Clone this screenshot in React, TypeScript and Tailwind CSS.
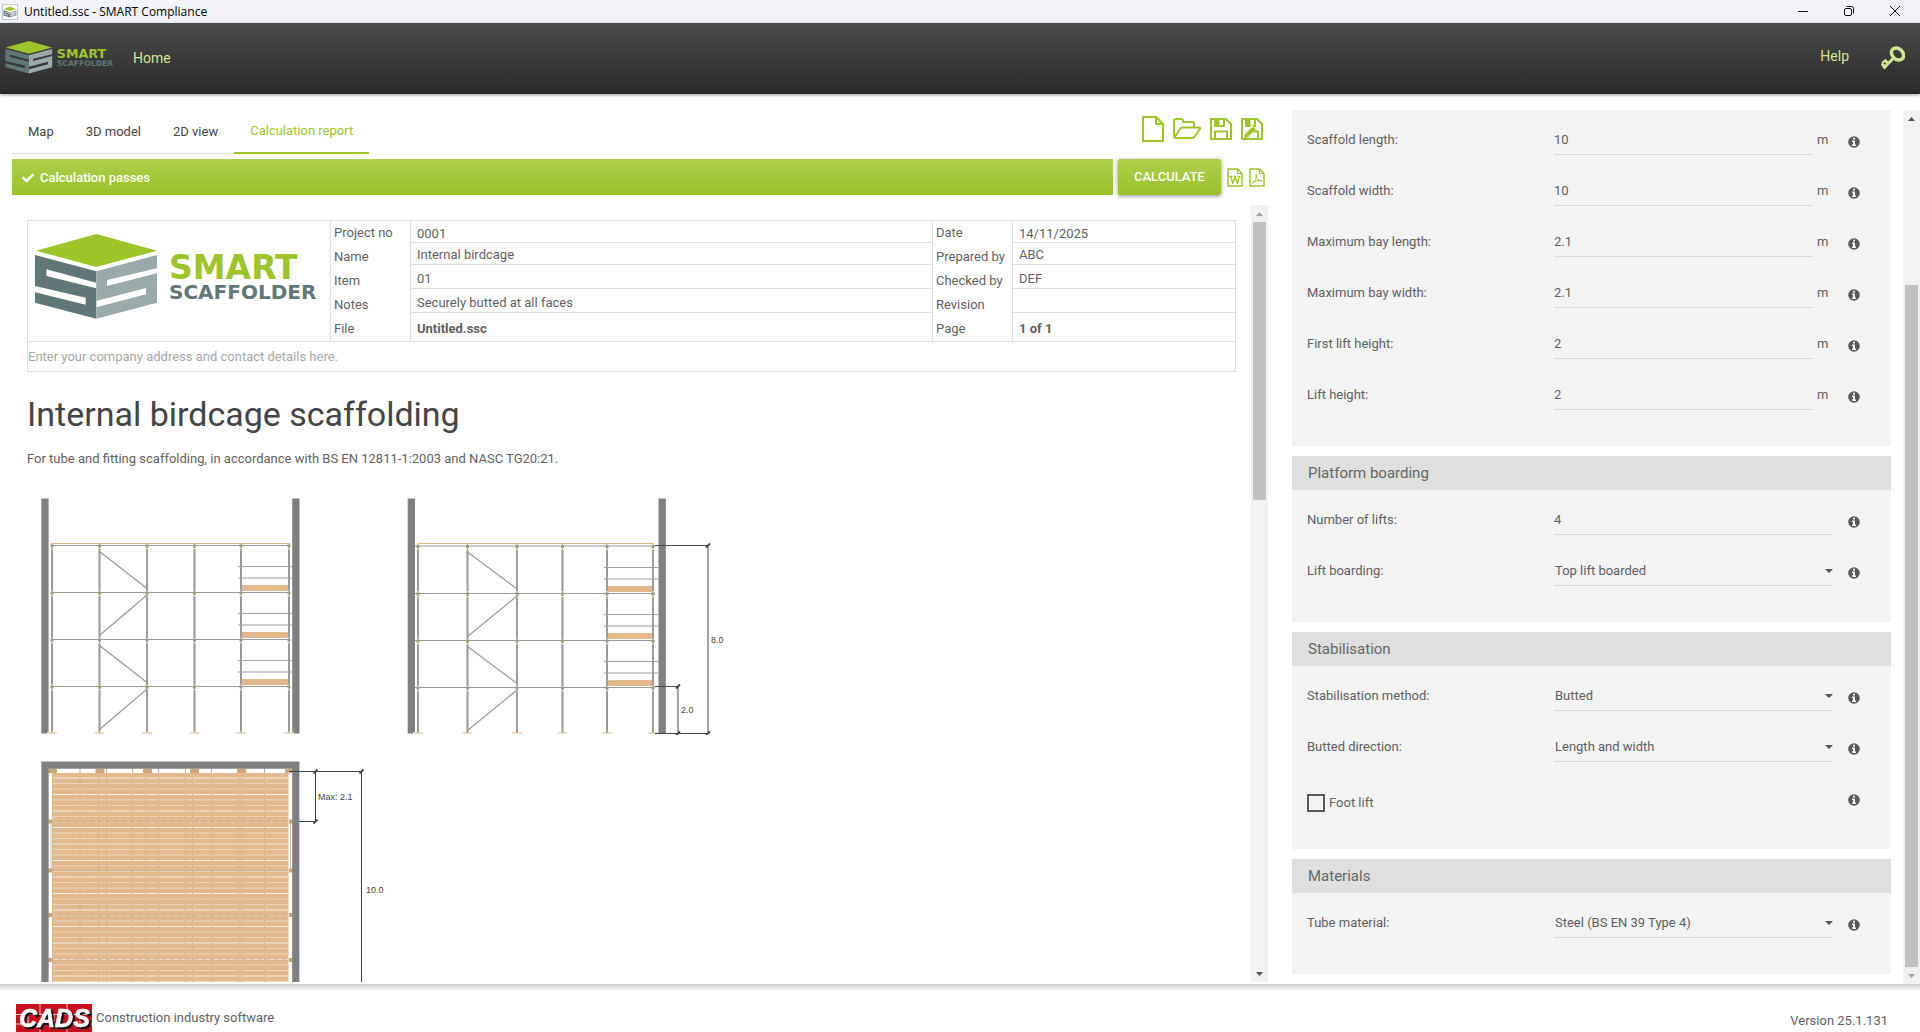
import React from "react";
import { FaCheck } from "react-icons/fa";

// Types
interface FieldProps {
  id: string;
  label: string;
  value: string;
  unit?: string;
  kind?: "text" | "select";
}

interface SectionData {
  title?: string;
  fields: FieldProps[];
  checkbox?: string;
}

const sections: SectionData[] = [
  {
    fields: [
      { id: "scaffold-length", label: "Scaffold length:", value: "10", unit: "m" },
      { id: "scaffold-width", label: "Scaffold width:", value: "10", unit: "m" },
      { id: "bay-length", label: "Maximum bay length:", value: "2.1", unit: "m" },
      { id: "bay-width", label: "Maximum bay width:", value: "2.1", unit: "m" },
      { id: "first-lift", label: "First lift height:", value: "2", unit: "m" },
      { id: "lift-height", label: "Lift height:", value: "2", unit: "m" },
    ],
  },
  {
    title: "Platform boarding",
    fields: [
      { id: "lifts", label: "Number of lifts:", value: "4" },
      { id: "boarding", label: "Lift boarding:", value: "Top lift boarded", kind: "select" },
    ],
  },
  {
    title: "Stabilisation",
    fields: [
      { id: "method", label: "Stabilisation method:", value: "Butted", kind: "select" },
      { id: "direction", label: "Butted direction:", value: "Length and width", kind: "select" },
    ],
    checkbox: "Foot lift",
  },
  {
    title: "Materials",
    fields: [
      { id: "tube", label: "Tube material:", value: "Steel (BS EN 39 Type 4)", kind: "select" },
    ],
  },
];

const reportRows = [
  ["Project no", "0001", "Date", "14/11/2025"],
  ["Name", "Internal birdcage", "Prepared by", "ABC"],
  ["Item", "01", "Checked by", "DEF"],
  ["Notes", "Securely butted at all faces", "Revision", ""],
  ["File", "Untitled.ssc", "Page", "1 of 1"],
];

const SmartLogo: React.FC<{ className?: string }> = ({ className }) => (
  <svg viewBox="34 232 284 90" className={className} role="img" aria-label="Smart Scaffolder">
    <polygon fill="#9dc428" points="36,250.7 96.3,234 157,250.7 96.3,267" />
    <polygon
      fill="#5f7777"
      points="35,255 96.3,271.3 96.3,282.7 46.5,269.3 46.5,276 96.3,288.3 96.3,318.7 35,302.7 35,292.3 85.7,304.7 85.7,297.7 35,286"
    />
    <polygon
      fill="#9aa9a9"
      points="96.3,271.3 157,255 157,268.3 107,280 107,286 157,273.3 157,302.7 96.3,318.7 96.3,307.3 146,294.3 146,288 96.3,301"
    />
    <g fontFamily="DejaVu Sans, sans-serif" fontWeight="700">
      <text x="169" y="279" fontSize="33" fill="#9dc428">SMART</text>
      <text x="169" y="299" fontSize="20" fill="#5f7777">SCAFFOLDER</text>
    </g>
  </svg>
);

const CadsLogo = () => (
  <svg viewBox="0 0 76 28" className="h-7 w-[76px]" role="img" aria-label="CADS">
    <rect width="76" height="28" fill="#c8101c" />
    <path
      d="M0 10.500H76M0 20H76M24 0V10M51 0V10M12 10V20M38 10V20M64 10V20M24 20V28M51 20V28"
      stroke="#f0c0b4"
      strokeWidth="1"
    />
    <text
      x="3"
      y="22.500"
      fontFamily="Liberation Sans, sans-serif"
      fontWeight="700"
      fontStyle="italic"
      fontSize="25"
      fill="#fff"
      stroke="#fff"
      strokeWidth="0.600"
      className="drop-shadow-[2px_2px_0_#111]"
    >
      CADS
    </text>
  </svg>
);

// Toolbar icons
const FileIcon = () => (
  <svg viewBox="0 0 24 28" className="h-7 w-6" fill="none" stroke="#9dc428" strokeWidth="2" strokeLinejoin="round">
    <path d="M2 2H15L22 9V26H2Z" />
    <path d="M15 2V9H22" />
  </svg>
);

const FolderIcon = () => (
  <svg viewBox="0 0 30 24" className="h-6 w-[30px]" fill="none" stroke="#9dc428" strokeWidth="2" strokeLinejoin="round">
    <path d="M2 18V4Q2 2 4 2H9Q11 2 11 4V5H20Q22 5 22 7V10" />
    <path d="M2.500 20.500L8 12Q9 10.500 11 10.500H27Q29 10.500 27.500 12.500L23 19Q22 21 20 21H4Q2 21 2 18" />
  </svg>
);

const SaveIcon: React.FC<{ edit?: boolean }> = ({ edit }) => (
  <svg viewBox="0 0 24 24" className="size-6" fill="none" stroke="#9dc428" strokeWidth="2" strokeLinejoin="round">
    <path d="M2 2H17L22 7V22H2Z" />
    <path d="M6 2V9H15V2" />
    <rect x="6.500" y="3" width="4" height="5.500" fill="#9dc428" stroke="none" />
    <path d="M6 22V14.500H18V22" />
    {edit && (
      <>
        <path d="M5 19L14 10" stroke="#fff" strokeWidth="6" />
        <path d="M7.500 17.500L14.500 11" strokeWidth="4" />
        <path d="M4 21L5.500 15.500L9.500 19.500Z" fill="#9dc428" stroke="none" />
      </>
    )}
  </svg>
);

const DocIcon: React.FC<{ type: "word" | "pdf" }> = ({ type }) => (
  <svg viewBox="0 0 16 19" className="h-[19px] w-4" fill="none" stroke="#9dc428" strokeLinejoin="round">
    <path d="M1 1H10.500L15 5.500V18H1Z" strokeWidth="1.500" />
    <path d="M10.500 1V5.500H15" strokeWidth="1.200" />
    {type === "word" ? (
      <path d="M2.500 8.500H5.500M6.800 8.500H9.400M10.700 8.500H13.500M4 8.500L5.600 15.500L8.100 9L10.500 15.500L12.200 8.500" strokeWidth="1.300" />
    ) : (
      <path d="M3 15.500C5 14.500 8 9.500 7.500 6.500C7.200 5 6.500 6 6.900 7.500C7.500 10.500 9.500 13 12.500 13.300C13.500 13.300 13 12.300 11.500 12.300C8.500 12.300 5.500 13.300 3.500 14.800" />
    )}
  </svg>
);

const KeyIcon = () => (
  <svg viewBox="0 0 24 24" className="size-6" fill="none" stroke="#d2e68f">
    <ellipse cx="16.500" cy="8" rx="6.800" ry="5.300" transform="rotate(45 16.500 8)" strokeWidth="3.500" />
    <path d="M12.500 12L2.500 22.500M7 17.500L3.500 13.800M3.600 20.800L0.800 17.500" strokeWidth="3" />
    <path d="M3.600 14.800L1 17.400" strokeWidth="2" />
  </svg>
);

const InfoIcon: React.FC<{ className: string }> = ({ className }) => (
  <svg viewBox="0 0 12 12" className={`mr-[31px] size-3 shrink-0 ${className}`}>
    <circle cx="6" cy="6" r="5.800" fill="#5a5a5a" />
    <path d="M5 1.800H7V3.500H5ZM4 4.500H7V8.500H8V10H4V8.500H5V6H4Z" fill="#f3f3f3" />
  </svg>
);

const WindowControls = () => (
  <div className="flex items-center pr-0.5 pb-0.5">
    <button aria-label="Minimise" className="flex h-5 w-[46px] items-center justify-center">
      <svg width="12" height="12" stroke="#111" fill="none"><path d="M1 6.500H11" /></svg>
    </button>
    <button aria-label="Restore" className="flex h-5 w-[46px] items-center justify-center">
      <svg width="12" height="12" stroke="#111" fill="none">
        <rect x="1.500" y="3.500" width="7" height="7" rx="1.500" />
        <path d="M3.500 1.500H8.500Q10.500 1.500 10.500 3.500V8.500" />
      </svg>
    </button>
    <button aria-label="Close" className="flex h-5 w-[46px] items-center justify-center">
      <svg width="12" height="12" stroke="#111" fill="none"><path d="M1 1L11 11M11 1L1 11" /></svg>
    </button>
  </div>
);

const Arrow: React.FC<{ down?: boolean; color: string }> = ({ down, color }) => (
  <svg width="7" height="4" viewBox="0 0 7 4" fill={color}>
    <path d={down ? "M0 0H7L3.500 4Z" : "M0 4H7L3.500 0Z"} />
  </svg>
);

// Dimension line with small slashed ends
const Dimension: React.FC<{ points: string; ticks: number[][] }> = ({ points, ticks }) => (
  <g stroke="#444" strokeWidth="1" fill="none">
    <path d={points} />
    {ticks.map(([x, y]) => (
      <path key={`${x}-${y}`} d={`M${x - 2} ${y + 2}L${x + 2} ${y - 2}`} strokeWidth="1.800" />
    ))}
  </g>
);

interface ElevationProps {
  walls: number[];
  posts: number[];
  ledgers: number[];
  from: number;
  to: number;
}

const Elevation: React.FC<ElevationProps> = ({ walls, posts, ledgers, from, to }) => {
  const left = posts[4];
  const right = posts[5];
  return (
    <>
      {walls.map((x) => (
        <rect key={x} x={x} y="498.500" width="7.300" height="235" fill="#808080" />
      ))}
      {posts.map((x) => (
        <g key={x}>
          <rect x={x - 5} y="732" width="10" height="2" fill="#f3dcc2" />
          <path d={`M${x} 543V733`} stroke="#b4b4b4" strokeWidth="1.300" />
          {ledgers.map((y) => (
            <path key={y} d={`M${x} ${y + 4}V${y + 45}`} stroke="#9a9a9a" strokeWidth="2" />
          ))}
        </g>
      ))}
      {ledgers.map((y, i) => {
        // braces zig-zag across the second bay
        const brace =
          i % 2 === 0
            ? `M${posts[1]} ${y + 6}L${posts[2]} ${y + 43}`
            : `M${posts[2]} ${y + 2.5}L${posts[1]} ${y + 43}`;
        return (
          <g key={y}>
            <path d={`M${from} ${y}H${to}`} stroke="#9a9a9a" strokeWidth="1.200" />
            <path d={brace} stroke="#9a9a9a" strokeWidth="1.300" />
            {posts.map((x) => (
              <rect key={x} x={x - 1.5} y={y - 1} width="3" height="3" fill="#a89878" />
            ))}
            {i > 0 && (
              <>
                <path d={`M${left - 3} ${y - 26}H${to + 3}M${left - 3} ${y - 14.5}H${to + 3}`} stroke="#a0a0a0" strokeWidth="1.200" />
                <rect x={left + 1} y={y - 7.5} width={right - left - 2} height="6" fill="#e2b88c" />
              </>
            )}
          </g>
        );
      })}
      <path d={`M${posts[0]} 543.500H${right}`} stroke="#e2b88c" strokeWidth="1.200" />
    </>
  );
};

const nodeRows = [821.5, 870.5, 915, 960];
const joints = [80, 98.5, 106.5, 132.5, 146, 158.5, 185.5, 192.5, 211.5, 238.5, 242, 264.5];
const plankGaps = Array.from({ length: 39 }, (_, i) => 778 + i * 5.5);

const PlanView = () => (
  <svg viewBox="27 755 373 235" className="h-[235px] w-[373px]">
    <path d="M52 773H288.500V990H52Z" fill="#e2b88c" />
    {plankGaps.map((y, i) => (
      <path key={y} d={`M53 ${y}H288`} stroke={i % 3 === 0 ? "#f6ece2" : "#edd5ba"} strokeWidth="1" />
    ))}
    {joints.map((x) => (
      <g key={x}>
        <path d={`M${x} 768V773`} stroke="#b0b0b0" />
        <path d={`M${x} 777.500V990`} stroke="#b9aa94" strokeDasharray="1 4.500" />
      </g>
    ))}
    <path d="M51 821V871M290.500 821V871" stroke="#c4c4c4" />
    {nodeRows.map((y) => (
      <g key={y}>
        <path d={`M49 ${y}H292`} stroke="#c5ad8e" strokeDasharray="6 2" />
        <rect x="48" y={y - 2} width="4" height="4" fill="#c9a678" />
        <rect x="289" y={y - 2} width="4" height="4" fill="#c9a678" />
      </g>
    ))}
    {[52, 99.5, 147, 194, 241, 289].map((x) => (
      <rect key={x} x={x - 4} y="769" width="9" height="4" fill="#cfa777" />
    ))}
    <path d="M45 990V765.200H295.800V990" fill="none" stroke="#808080" strokeWidth="7.300" />
    <Dimension
      points="M289 771.500H362M315.500 771.500V821.500M299 821.500H316M361.500 771.500V990"
      ticks={[[315.5, 771.5], [315.5, 821.5], [361.5, 771.5]]}
    />
    <g fontFamily="Liberation Sans, sans-serif" fontSize="9" fill="#444">
      <text x="318" y="800">Max: 2.1</text>
      <text x="366" y="893">10.0</text>
    </g>
  </svg>
);

const ReportTable = () => (
  <table className="w-full table-fixed border-collapse border border-[#dcdee2]">
    <colgroup>
      <col className="w-[303px]" />
      <col className="w-20" />
      <col />
      <col className="w-20" />
      <col className="w-[223px]" />
    </colgroup>
    <tbody>
      {reportRows.map((row, i) => (
        <tr key={row[0]} className="h-6">
          {i === 0 && (
            <td rowSpan={5} className="border border-[#dcdee2] px-1.5 align-middle">
              <SmartLogo className="-mt-2 h-[90px] w-[284px]" />
            </td>
          )}
          {[0, 2].map((c) => (
            <React.Fragment key={c}>
              <td className="border-x border-[#dcdee2] pl-[3px] leading-6 whitespace-nowrap">{row[c]}</td>
              <td className="border-x border-[#dcdee2] p-0 align-top">
                {i === 4 ? (
                  <b className="pl-1.5 leading-6 font-bold">{row[c + 1]}</b>
                ) : (
                  <input
                    aria-label={row[c]}
                    defaultValue={row[c + 1]}
                    className={`block w-full border-b border-[#dcdee2] pl-1.5 ${i === 0 ? "h-[22px] pt-1" : "h-5"}`}
                  />
                )}
              </td>
            </React.Fragment>
          ))}
        </tr>
      ))}
      <tr>
        <td colSpan={5} className="border border-[#dcdee2] p-0">
          <input
            aria-label="Company address"
            placeholder="Enter your company address and contact details here."
            className="block h-[29px] w-full placeholder:text-[#a6a6a6]"
          />
        </td>
      </tr>
    </tbody>
  </table>
);

const Field: React.FC<FieldProps> = ({ id, label, value, unit, kind = "text" }) => (
  <div className="flex h-[51px] items-start pt-4">
    <label htmlFor={id} className="w-[247px] shrink-0 leading-7">{label}</label>
    {kind === "text" ? (
      <input id={id} defaultValue={value} className="h-[29px] min-w-0 flex-1 border-b border-[#d8d8d8] pb-px" />
    ) : (
      <div className="relative flex-1">
        <select id={id} className="block h-[29px] w-full appearance-none border-b border-[#d8d8d8] pb-px pl-px">
          <option>{value}</option>
        </select>
        <span className="pointer-events-none absolute top-3 right-0 block">
          <svg width="8" height="4" viewBox="0 0 8 4" fill="#555"><path d="M0 0H8L4 4Z" /></svg>
        </span>
      </div>
    )}
    {unit && <span className="w-5 pl-1 leading-7">{unit}</span>}
    <InfoIcon className="mt-2.5 ml-[15px]" />
  </div>
);

const Section: React.FC<{ section: SectionData }> = ({ section }) => (
  <section className="bg-[#f3f3f3]">
    {section.title && (
      <h2 className="h-[34px] bg-[#dfdfdf] pl-4 text-[15px] leading-[34px] text-[#666]">{section.title}</h2>
    )}
    <div className="pb-[30px] pl-[15px]">
      {section.fields.map((f) => (
        <Field key={f.id} {...f} />
      ))}
      {section.checkbox && (
        <div className="flex h-[51px] items-start justify-between pt-[25px]">
          <label className="flex items-center gap-1 leading-5">
            <input type="checkbox" className="size-[18px] appearance-none border-2 border-[#5a5a5a]" />
            {section.checkbox}
          </label>
          <InfoIcon className="mt-px" />
        </div>
      )}
    </div>
  </section>
);

const tabs = ["Map", "3D model", "2D view", "Calculation report"];

const App = () => (
  <div className="flex h-screen flex-col overflow-hidden bg-white font-[Roboto,'Liberation_Sans',sans-serif] text-[13px] text-[#5f5f5f]">
    <div className="flex h-[23px] shrink-0 items-center justify-between bg-[#f1f3f9]">
      <div className="flex items-center gap-1.5 pl-0.5 font-['Open_Sans','Noto_Sans',sans-serif] text-xs text-black">
        <svg viewBox="0 0 16 16" className="size-4">
          <rect x="0.500" y="0.500" width="15" height="15" fill="#fff" stroke="#c4c8cc" />
          <path d="M2 5L8 2.500L14 5L8 7Z" fill="#9dc428" />
          <path d="M1.500 6L8 8.500V13.500L1.500 11.500Z" fill="#5f7777" />
          <path d="M14.500 6L8 8.500V13.500L14.500 11.500Z" fill="#9aa9a9" />
          <path d="M3 8L8 9.700M2 10L6.500 11.500M13.500 8L9 9.700M8 11.800L13 10" stroke="#fff" strokeWidth="0.700" />
        </svg>
        <span>Untitled.ssc - SMART Compliance</span>
      </div>
      <WindowControls />
    </div>

    <header className="z-10 flex h-[71px] shrink-0 items-center justify-between bg-linear-to-b from-[#4b4b4b] to-[#2a2a2a] pr-[15px] pb-0.5 pl-[5px] text-sm text-[#d2e68f] shadow-[0_1px_3px_rgba(0,0,0,0.4)]">
      <div className="flex items-center">
        <SmartLogo className="h-[35px] w-[109px]" />
        <a href="#home" className="ml-[19px]">Home</a>
      </div>
      <div className="flex items-start gap-8">
        <a href="#help">Help</a>
        <button aria-label="Licence"><KeyIcon /></button>
      </div>
    </header>

    <main className="grid min-h-0 flex-1 grid-cols-[minmax(0,1268fr)_minmax(0,652fr)]">
      <div className="flex min-h-0 min-w-0 flex-col pt-4 pb-0.5 pl-3">
        <div className="flex h-11 items-start justify-between">
          <nav className="flex h-11">
            {tabs.map((tab, i) => (
              <button
                key={tab}
                className={`px-4 text-[13px] ${
                  i === 3 ? "border-b-2 border-[#9dc428] text-[#9dc428]" : "border-b border-[#dcdcdc] text-[#444]"
                }`}
              >
                {tab}
              </button>
            ))}
          </nav>
          <div className="flex h-[38px] items-center gap-[7px] pr-1">
            <button aria-label="New"><FileIcon /></button>
            <button aria-label="Open"><FolderIcon /></button>
            <button aria-label="Save"><SaveIcon /></button>
            <button aria-label="Save as"><SaveIcon edit /></button>
          </div>
        </div>

        <div className="mt-[5px] flex h-9 shrink-0 items-center">
          <div className="mr-[5px] flex h-9 flex-1 items-center gap-1.5 bg-linear-to-b from-[#adcf4c] to-[#9ac127] pt-0.5 pl-2.5 text-[13px] font-medium text-white">
            <FaCheck className="size-3" />
            Calculation passes
          </div>
          <button className="h-9 w-[103px] rounded-xs bg-linear-to-b from-[#adcf4c] to-[#9ac127] text-[13px] font-medium text-white shadow-[0_1px_4px_rgba(0,0,0,0.45)]">
            CALCULATE
          </button>
          <button aria-label="Export to Word" className="ml-1.5"><DocIcon type="word" /></button>
          <button aria-label="Export to PDF" className="mr-[3px] ml-1.5"><DocIcon type="pdf" /></button>
        </div>

        <div className="mt-2.5 flex min-h-0 flex-1">
          <article className="min-w-0 flex-1 overflow-hidden pt-[15px] pr-[15px] pl-[15px]">
            <ReportTable />
            <h1 className="mt-5 text-[34px] leading-[44px] text-[#444]">Internal birdcage scaffolding</h1>
            <p className="mt-[11px] leading-6">
              For tube and fitting scaffolding, in accordance with BS EN 12811-1:2003 and NASC TG20:21.
            </p>
            <div className="mt-6 flex">
              <svg viewBox="27 495 373 240" className="h-[240px] w-[373px]">
                <Elevation
                  walls={[41.3, 292.2]}
                  posts={[52, 99.5, 147, 194.5, 241, 289]}
                  ledgers={[545.5, 592.5, 639.5, 686.5]}
                  from={51}
                  to={289}
                />
              </svg>
              <svg viewBox="400 495 373 240" className="h-[240px] w-[373px]">
                <Elevation
                  walls={[407.7, 658.5]}
                  posts={[418, 467.5, 517, 562.5, 607, 653]}
                  ledgers={[546, 593.5, 640.5, 687.5]}
                  from={415}
                  to={655}
                />
                <Dimension
                  points="M655 545.500H709M708 545.500V733.500M655 686.500H679M678 686.500V733.500M655 733.500H709"
                  ticks={[[708, 545.5], [708, 733.5], [678, 686.5], [678, 733.5]]}
                />
                <g fontFamily="Liberation Sans, sans-serif" fontSize="9" fill="#444">
                  <text x="711" y="643">8.0</text>
                  <text x="681" y="713">2.0</text>
                </g>
              </svg>
            </div>
            <div className="mt-5">
              <PlanView />
            </div>
          </article>
          <div className="flex w-[17px] shrink-0 flex-col items-center bg-[#f1f1f1]">
            <span className="flex h-[17px] shrink-0 items-center"><Arrow color="#a3a3a3" /></span>
            <span className="h-[278px] w-[13px] bg-[#c1c1c1]" />
            <span className="mt-auto flex h-[17px] items-center"><Arrow down color="#505050" /></span>
          </div>
        </div>
      </div>

      <div className="flex min-h-0 pt-4 pl-6">
        <div className="flex min-w-0 flex-1 flex-col gap-2.5 overflow-hidden pr-3">
          {sections.map((s, i) => (
            <Section key={i} section={s} />
          ))}
        </div>
        <div className="flex w-[17px] shrink-0 flex-col items-center bg-[#f1f1f1]">
          <span className="flex h-[17px] shrink-0 items-center"><Arrow color="#505050" /></span>
          <span className="mt-auto h-[682px] w-[13px] bg-[#c1c1c1]" />
          <span className="flex h-[17px] items-center"><Arrow down color="#a3a3a3" /></span>
        </div>
      </div>
    </main>

    <footer className="z-10 flex h-12 shrink-0 items-end justify-between bg-linear-to-b from-[#cfcfcf] via-white via-15% to-white pr-8 pl-4">
      <div className="flex items-center gap-1">
        <CadsLogo />
        <span>Construction industry software</span>
      </div>
      <span className="pb-[3px] leading-4">Version 25.1.131</span>
    </footer>
  </div>
);

export default App;
